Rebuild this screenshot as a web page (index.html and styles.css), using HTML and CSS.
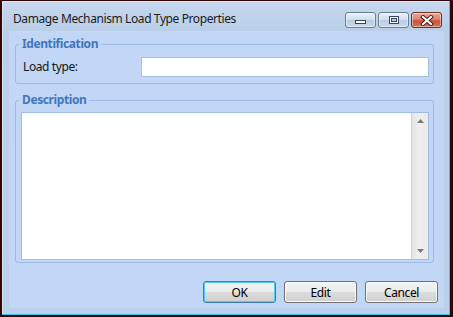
FILE: index.html
```html
<!DOCTYPE html>
<html>
<head>
<meta charset="utf-8">
<link rel="stylesheet" href="styles.css">
</head>
<body>
<div class="window">
  <div class="titlebar">
    <span class="title">Damage Mechanism Load Type Properties</span>
    <div class="caption-buttons">
      <span class="cbtn min"><svg width="11" height="4" viewBox="0 0 11 4"><rect x="0.5" y="0.5" width="10" height="3" fill="#fff" stroke="#34425a"/></svg></span>
      <span class="cbtn max"><svg width="10" height="8" viewBox="0 0 10 8"><rect x="0.5" y="0.5" width="9" height="7" fill="#f4f7fb" stroke="#3a475c"/><rect x="2.5" y="2.5" width="5" height="3" fill="#b9cbe2" stroke="#3a475c"/></svg></span>
      <span class="cbtn close"><svg width="14" height="11" viewBox="0 0 14 11"><path d="M3 2 L11 9 M11 2 L3 9" stroke="#4b1d17" stroke-width="4" stroke-linecap="square"/><path d="M3 2 L11 9 M11 2 L3 9" stroke="#ffffff" stroke-width="2" stroke-linecap="square"/></svg></span>
    </div>
  </div>
  <div class="client">
    <fieldset class="group">
      <legend>Identification</legend>
      <div class="row">
        <label class="label">Load type:</label>
        <span class="input"></span>
      </div>
    </fieldset>
    <fieldset class="group desc">
      <legend>Description</legend>
      <div class="memo-wrap">
        <div class="memo">
          <div class="memo-text"></div>
          <div class="vscroll">
            <svg width="7" height="4" viewBox="0 0 7 4"><path d="M0 4 L3.5 0 L7 4 Z" fill="#7a7a7a"/></svg>
            <svg width="7" height="4" viewBox="0 0 7 4"><path d="M0 0 L7 0 L3.5 4 Z" fill="#7a7a7a"/></svg>
          </div>
        </div>
      </div>
    </fieldset>
    <div class="actions">
      <button class="btn default">OK</button>
      <button class="btn">Edit</button>
      <button class="btn">Cancel</button>
    </div>
  </div>
</div>
</body>
</html>
```

FILE: styles.css
```css
html, body {
  margin: 0;
  padding: 0;
}
body {
  width: 453px;
  height: 317px;
  background: #320606;
  padding: 1px 3px 2px 2px;
  box-sizing: border-box;
  font-family: "Noto Sans", "Open Sans", sans-serif;
  font-size: 12px;
  letter-spacing: -0.4px;
  color: #111;
}
.window {
  width: 448px;
  height: 314px;
  box-sizing: border-box;
  padding: 0 5px 6px 7px;
  border-right: 1px solid #5fb8dc;
  border-bottom: 1px solid #38c4ec;
  background: linear-gradient(#c7d8ee, #b9cee8 30px, #bbd0ea);
  box-shadow: inset 1px 1px 0 #d7e4f4;
  display: flex;
  flex-direction: column;
}
.titlebar {
  height: 30px;
  display: flex;
  align-items: flex-start;
  justify-content: space-between;
}
.title {
  margin-left: 4px;
  margin-top: 10px;
  line-height: 16px;
  color: #1b1b1b;
}
.caption-buttons {
  display: flex;
  gap: 2px;
  margin-top: 11px;
  margin-right: 2px;
}
.cbtn {
  width: 31px;
  height: 16px;
  box-sizing: border-box;
  border: 1px solid #6a7b92;
  border-radius: 3px;
  display: flex;
  justify-content: center;
  background: linear-gradient(#e9f0f9, #cfdded 50%, #b9cce4 50%, #c9d9ee);
  box-shadow: inset 0 0 0 1px rgba(255,255,255,0.45);
}
.cbtn.min { align-items: flex-end; padding-bottom: 3px; }
.cbtn.max { align-items: center; }
.cbtn.close {
  align-items: center;
  border-color: #6e3128;
  background: linear-gradient(#e8a99b, #d98572 45%, #c9543e 55%, #d56f58);
}
.client {
  flex: 1;
  background: #c1d7f5;
  padding: 5px 6px 5px 6px;
  display: flex;
  flex-direction: column;
}
.group {
  margin: 0 4px 0 0;
  padding: 0;
  border: 1px solid #9dbbe4;
  border-radius: 3px;
  min-width: 0;
}
.group legend {
  margin-left: 3px;
  padding: 0 3px;
  font-weight: bold;
  line-height: 16px;
  color: #4176bd;
}
.group.desc {
  margin-top: 8px;
}
.row {
  display: flex;
  align-items: center;
  justify-content: space-between;
  padding: 5px 4px 6px 7px;
}
.label {
  line-height: 16px;
  color: #151515;
}
.input {
  width: 288px;
  height: 20px;
  box-sizing: border-box;
  background: #fff;
  border: 1px solid #a9bfdc;
}
.memo-wrap {
  padding: 4px 4px 2px 5px;
}
.memo {
  height: 148px;
  box-sizing: border-box;
  border: 1px solid #a1bde5;
  display: flex;
  background: #fff;
}
.memo-text {
  flex: 1;
}
.vscroll {
  width: 17px;
  box-sizing: border-box;
  border-left: 1px solid #d2d2d2;
  background: linear-gradient(to right, #e4e4e4, #efefef 40%, #ebebeb);
  display: flex;
  flex-direction: column;
  justify-content: space-between;
  align-items: center;
  padding: 6px 0 6px 0;
}
.vscroll svg { display: block; }
.actions {
  margin-top: 18px;
  display: flex;
  justify-content: flex-end;
  gap: 8px;
}
.btn {
  width: 73px;
  height: 22px;
  box-sizing: border-box;
  margin: 0;
  padding: 0;
  font-family: "Noto Sans", "Open Sans", sans-serif;
  font-size: 12px;
  letter-spacing: -0.4px;
  color: #000;
  border: 1px solid #707070;
  border-radius: 3px;
  background: linear-gradient(#f3f3f3, #ebebeb 50%, #dddddd 50%, #cfcfcf);
  box-shadow: inset 0 0 0 1px #fbfbfb;
}
.btn.default {
  border-color: #3c7fb1;
  box-shadow: inset 0 0 0 1px #4cd0f2;
}
```
